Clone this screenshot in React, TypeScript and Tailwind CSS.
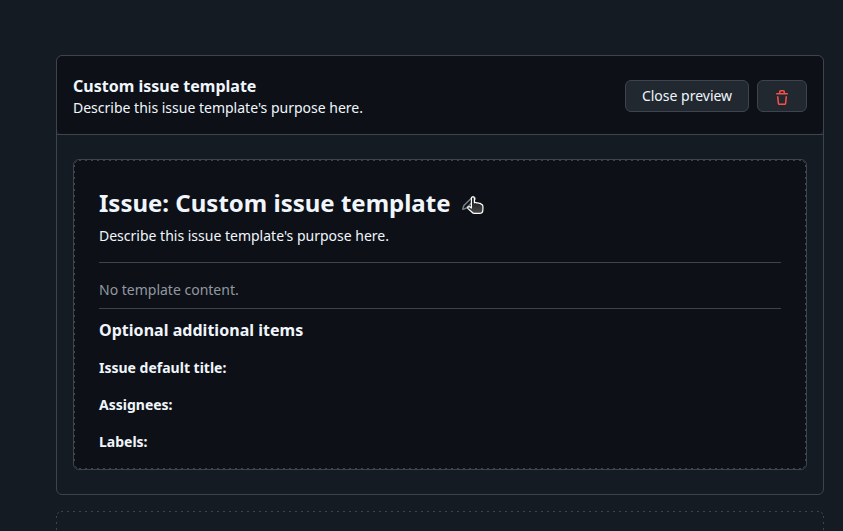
import React from "react";

function TrashIcon() {
  return (
    <svg width="16" height="16" viewBox="0 0 16 16" fill="#f85149" aria-hidden="true">
      <path d="M11 1.75V3h2.25a.75.75 0 0 1 0 1.5H2.75a.75.75 0 0 1 0-1.5H5V1.75C5 .784 5.784 0 6.75 0h2.5C10.216 0 11 .784 11 1.75ZM4.496 6.675l.66 6.6a.25.25 0 0 0 .249.225h5.19a.25.25 0 0 0 .249-.225l.66-6.6a.75.75 0 0 1 1.492.149l-.66 6.6A1.748 1.748 0 0 1 10.595 15h-5.19a1.75 1.75 0 0 1-1.741-1.575l-.66-6.6a.75.75 0 1 1 1.492-.15ZM6.5 1.75V3h3V1.75a.25.25 0 0 0-.25-.25h-2.5a.25.25 0 0 0-.25.25Z" />
    </svg>
  );
}

function PencilIcon() {
  return (
    <svg width="16" height="16" viewBox="0 0 16 16" fill="#9198a1" fillOpacity="0.8" aria-hidden="true">
      <path d="M11.013 1.427a1.75 1.75 0 0 1 2.474 0l1.086 1.086a1.75 1.75 0 0 1 0 2.474l-8.61 8.61c-.21.21-.47.364-.756.445l-3.251.93a.75.75 0 0 1-.927-.928l.929-3.25c.081-.286.235-.547.445-.758l8.61-8.61Zm.176 4.823L9.75 4.81l-6.286 6.287a.253.253 0 0 0-.064.108l-.558 1.953 1.953-.558a.253.253 0 0 0 .108-.064Zm1.238-3.763a.25.25 0 0 0-.354 0L10.811 3.75l1.439 1.44 1.263-1.263a.25.25 0 0 0 0-.354Z" />
    </svg>
  );
}

function HandPointer() {
  return (
    <svg className="absolute left-[6px] top-[3px]" width="17" height="19" viewBox="0 0 17 19" aria-hidden="true">
      <defs>
        <linearGradient id="hand" x1="0" y1="0" x2="0" y2="1">
          <stop offset="0.3" stopColor="#222" />
          <stop offset="1" stopColor="#4a4a4a" />
        </linearGradient>
      </defs>
      <path
        d="M4.4 2C4.4.4 7.4.4 7.4 2V6.8Q8.6 6 9.8 7Q11.2 6.4 12.2 7.4Q13.8 7 14.4 8.4Q15.9 8.8 15.9 10.2V13.4Q15.9 17.4 12.5 17.4H7.5Q6 17.4 4.8 16L1 12.6C.1 11.4 1.6 10 2.8 10.8L4.4 12Z"
        fill="url(#hand)"
        stroke="#fff"
        strokeWidth="1.2"
        strokeLinejoin="round"
      />
    </svg>
  );
}

/** Rounded outline whose dashes stay on whole pixels along each side. */
function DashedOutline({ width: w, height: h }: { width: number; height: number }) {
  return (
    <svg className="pointer-events-none absolute left-0 top-0" width={w} height={h} fill="none" stroke="#3d444d" aria-hidden="true">
      <g strokeDasharray="2 4">
        <path d={`M5 .5H${w - 5}`} />
        <path d={`M5 ${h - 0.5}H${w - 5}`} />
        <path d={`M.5 5V${h - 5}`} />
        <path d={`M${w - 0.5} 5V${h - 5}`} />
      </g>
      <path d={`M1.2 2.8L2.8 1.2M${w - 1.2} 2.8L${w - 2.8} 1.2M1.2 ${h - 2.8}L2.8 ${h - 1.2}M${w - 1.2} ${h - 2.8}L${w - 2.8} ${h - 1.2}`} />
    </svg>
  );
}

export default function App() {
  return (
    <div className="h-[531px] overflow-hidden bg-[#151b23] pl-14 pr-[19px] pt-[55px] font-['Noto_Sans',sans-serif] text-sm leading-[21px] text-[#f0f6fc]">
      <section className="h-[440px] rounded-md border border-[#3d444d]">
        <header className="flex h-[78px] items-center justify-between rounded-md bg-[#0d1117] px-4">
          <div className="pt-0.5">
            <h3 className="text-base leading-[22px] font-bold">Custom issue template</h3>
            <p>Describe this issue template's purpose here.</p>
          </div>
          <div className="flex gap-2 pt-0.5">
            <button className="h-8 w-[124px] rounded-md border border-[#3d444d] bg-[#212830] pb-0.5">Close preview</button>
            <button className="flex h-8 w-[50px] items-center justify-center rounded-md border border-[#3d444d] bg-[#212830] pt-1" aria-label="Delete template">
              <TrashIcon />
            </button>
          </div>
        </header>
        <div className="border-t border-[#3d444d] px-4 pt-6">
          <div className="rounded-md border border-[#3d444d] bg-[#0d1117]">
            <div className="relative h-[309px] px-[25px] pt-[23px]">
              <DashedOutline width={732} height={309} />
              <div className="flex h-10 items-center">
                <h2 className="text-2xl font-bold">Issue: Custom issue template</h2>
                <button className="relative ml-[11px] h-5 w-6" aria-label="Edit template">
                  <PencilIcon />
                  <HandPointer />
                </button>
              </div>
              <p className="mt-[2px]">Describe this issue template's purpose here.</p>
              <div className="mt-4 h-[47px] border-y border-[#3d444d] pt-4 text-[#9198a1]">No template content.</div>
              <h4 className="mt-[9px] text-base leading-6 font-bold tracking-[0.03px]">Optional additional items</h4>
              <p className="mt-[15px] font-bold">Issue default title:</p>
              <p className="mt-4 font-bold">Assignees:</p>
              <p className="mt-4 font-bold">Labels:</p>
            </div>
          </div>
        </div>
      </section>
      <section className="relative mt-4 h-20">
        <DashedOutline width={768} height={80} />
      </section>
    </div>
  );
}
